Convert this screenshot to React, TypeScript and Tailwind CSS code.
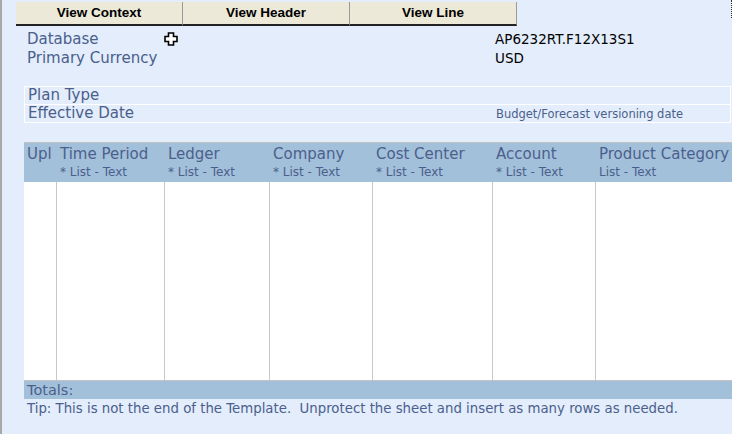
import React from 'react';

const font = { fontFamily: '"DejaVu Sans", Verdana, sans-serif' };

const columns = [
  { name: 'Upl', sub: '', w: 'w-[33px]' },
  { name: 'Time Period', sub: '* List - Text', w: 'w-[108px]' },
  { name: 'Ledger', sub: '* List - Text', w: 'w-[105px]' },
  { name: 'Company', sub: '* List - Text', w: 'w-[103px]' },
  { name: 'Cost Center', sub: '* List - Text', w: 'w-[120px]' },
  { name: 'Account', sub: '* List - Text', w: 'w-[103px]' },
  { name: 'Product Category', sub: 'List - Text', w: 'flex-1' },
];

const Btn: React.FC<{ label: string }> = ({ label }) => (
  <div
    className="w-[167px] h-[24px] flex items-center justify-center bg-[#ece9d8] border-b-2 border-r border-b-[#222] border-r-[#9a9a9a] text-[13.5px] font-bold text-black"
    style={{ fontFamily: '"Liberation Sans", Arial, sans-serif' }}
  >
    {label}
  </div>
);

// move cursor drawn over the sheet
const MoveCursor = () => (
  <svg width="14" height="14" viewBox="0 0 14 14" className="absolute left-[137px] top-[2px]">
    <path d="M4.5 1h5v3.5h3.5v5h-3.5v3.5h-5v-3.5h-3.5v-5h3.5z" fill="#fff" stroke="#000" strokeWidth="1.6" />
  </svg>
);

export default function App() {
  return (
    <div className="w-[732px] h-[434px] bg-[#e3edfb] border-l-2 border-[#a8a8a8] overflow-hidden relative" style={font}>
      {/* toolbar */}
      <div className="flex pl-[14px] pt-[2px]">
        <Btn label="View Context" />
        <Btn label="View Header" />
        <Btn label="View Line" />
      </div>

      {/* context */}
      <div className="pl-[25px] pt-[4px] text-[15px] leading-[19px] text-[#4b5f8c]">
        <div className="flex">
          <span className="w-[468px] relative">
            Database
            <MoveCursor />
          </span>
          <span className="text-black text-[13.5px]">AP6232RT.F12X13S1</span>
        </div>
        <div className="flex">
          <span className="w-[468px]">Primary Currency</span>
          <span className="text-black text-[13.5px]">USD</span>
        </div>
      </div>

      {/* plan */}
      <div className="ml-[22px] mt-[18px] w-[707px] border-t border-r border-l border-white text-[15px] text-[#4b5f8c]">
        <div className="h-[18px] leading-[17px] pl-[3px] border-b border-white">Plan Type</div>
        <div className="h-[18px] leading-[17px] pl-[3px] border-b border-white flex">
          <span className="w-[468px]">Effective Date</span>
          <span className="text-[11.5px] leading-[19px]">Budget/Forecast versioning date</span>
        </div>
      </div>

      {/* table */}
      <div className="ml-[22px] mt-[19px] w-[708px] border-t border-[#c3c3c3] text-[#4b5f8c]">
        <div className="flex h-[39px] bg-[#a3c0da]">
          {columns.map((c) => (
            <div key={c.name} className={`${c.w} pl-[3px] pt-[1px] whitespace-nowrap overflow-hidden`}>
              <div className="text-[15px] leading-[20px]">{c.name}</div>
              <div className="text-[12px] leading-[17px]">{c.sub}</div>
            </div>
          ))}
        </div>
        <div className="flex h-[199px] bg-white border-b border-[#c3c3c3]">
          {columns.map((c, i) => (
            <div key={c.name} className={`${c.w} ${i < columns.length - 1 ? 'border-r border-[#c8c8c8]' : ''}`} />
          ))}
        </div>
        <div className="h-[18px] bg-[#a3c0da] pl-[3px] text-[14.5px] leading-[18px]">Totals:</div>
        <div className="pl-[3px] pt-[1px] text-[13.3px] leading-[18px] whitespace-nowrap">
          Tip: This is not the end of the Template.&nbsp; Unprotect the sheet and insert as many rows as needed.
        </div>
      </div>

      <div className="absolute right-0 top-0 h-[18px] border-r border-dotted border-[#333]" />
    </div>
  );
}
